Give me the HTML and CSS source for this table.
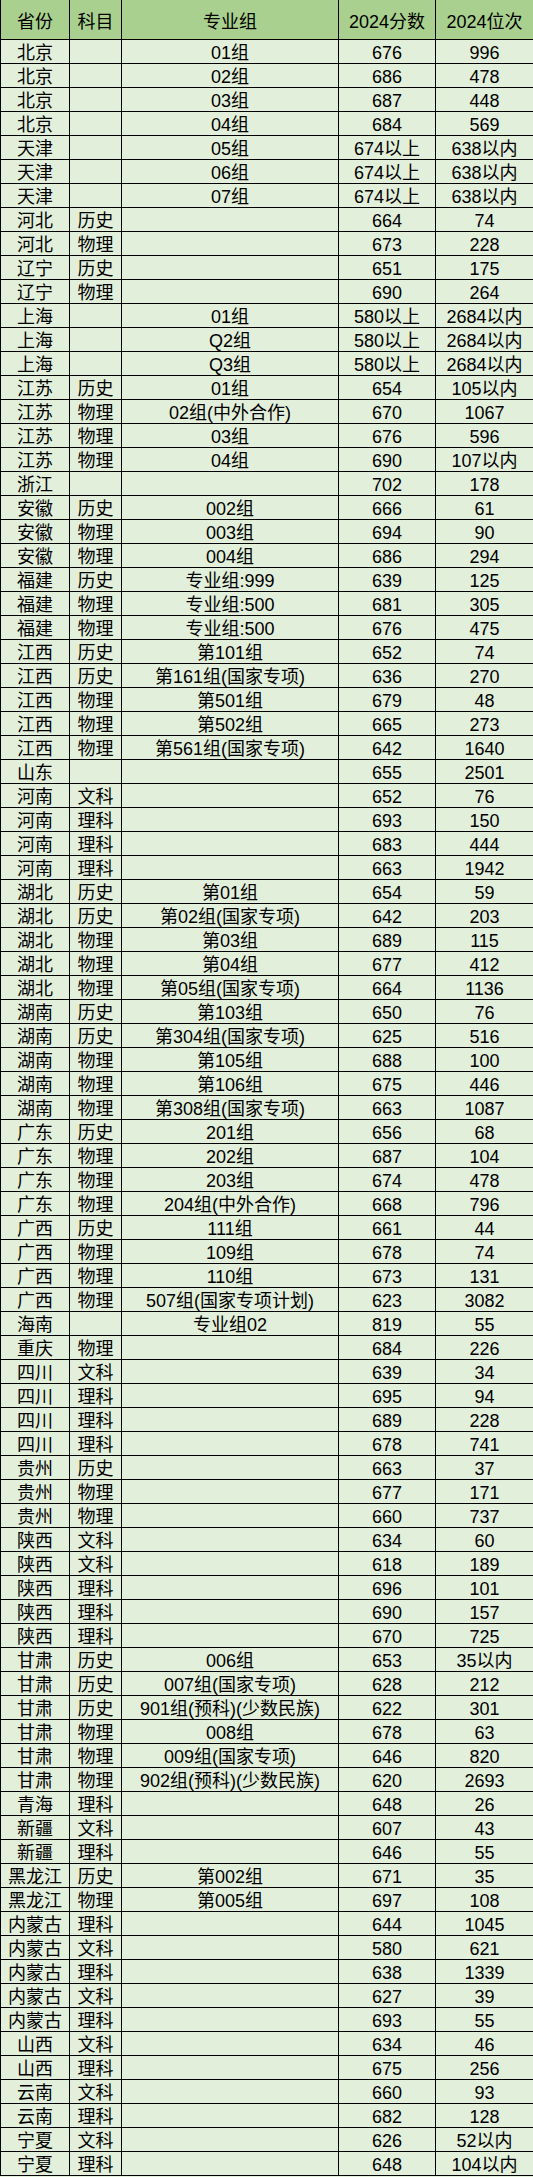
FILE: index.html
```html
<!DOCTYPE html>
<html lang="zh">
<head>
<meta charset="utf-8">
<title>2024分数位次</title>
<link rel="stylesheet" href="styles.css">
</head>
<body>
<table class="score-table">
<colgroup>
<col class="c-prov"><col class="c-subj"><col class="c-group"><col class="c-score"><col class="c-rank">
</colgroup>
<thead>
<tr><th>省份</th><th>科目</th><th>专业组</th><th>2024分数</th><th>2024位次</th></tr>
</thead>
<tbody>
<tr><td>北京</td><td></td><td>01组</td><td>676</td><td>996</td></tr>
<tr><td>北京</td><td></td><td>02组</td><td>686</td><td>478</td></tr>
<tr><td>北京</td><td></td><td>03组</td><td>687</td><td>448</td></tr>
<tr><td>北京</td><td></td><td>04组</td><td>684</td><td>569</td></tr>
<tr><td>天津</td><td></td><td>05组</td><td>674以上</td><td>638以内</td></tr>
<tr><td>天津</td><td></td><td>06组</td><td>674以上</td><td>638以内</td></tr>
<tr><td>天津</td><td></td><td>07组</td><td>674以上</td><td>638以内</td></tr>
<tr><td>河北</td><td>历史</td><td></td><td>664</td><td>74</td></tr>
<tr><td>河北</td><td>物理</td><td></td><td>673</td><td>228</td></tr>
<tr><td>辽宁</td><td>历史</td><td></td><td>651</td><td>175</td></tr>
<tr><td>辽宁</td><td>物理</td><td></td><td>690</td><td>264</td></tr>
<tr><td>上海</td><td></td><td>01组</td><td>580以上</td><td>2684以内</td></tr>
<tr><td>上海</td><td></td><td>Q2组</td><td>580以上</td><td>2684以内</td></tr>
<tr><td>上海</td><td></td><td>Q3组</td><td>580以上</td><td>2684以内</td></tr>
<tr><td>江苏</td><td>历史</td><td>01组</td><td>654</td><td>105以内</td></tr>
<tr><td>江苏</td><td>物理</td><td>02组(中外合作)</td><td>670</td><td>1067</td></tr>
<tr><td>江苏</td><td>物理</td><td>03组</td><td>676</td><td>596</td></tr>
<tr><td>江苏</td><td>物理</td><td>04组</td><td>690</td><td>107以内</td></tr>
<tr><td>浙江</td><td></td><td></td><td>702</td><td>178</td></tr>
<tr><td>安徽</td><td>历史</td><td>002组</td><td>666</td><td>61</td></tr>
<tr><td>安徽</td><td>物理</td><td>003组</td><td>694</td><td>90</td></tr>
<tr><td>安徽</td><td>物理</td><td>004组</td><td>686</td><td>294</td></tr>
<tr><td>福建</td><td>历史</td><td>专业组:999</td><td>639</td><td>125</td></tr>
<tr><td>福建</td><td>物理</td><td>专业组:500</td><td>681</td><td>305</td></tr>
<tr><td>福建</td><td>物理</td><td>专业组:500</td><td>676</td><td>475</td></tr>
<tr><td>江西</td><td>历史</td><td>第101组</td><td>652</td><td>74</td></tr>
<tr><td>江西</td><td>历史</td><td>第161组(国家专项)</td><td>636</td><td>270</td></tr>
<tr><td>江西</td><td>物理</td><td>第501组</td><td>679</td><td>48</td></tr>
<tr><td>江西</td><td>物理</td><td>第502组</td><td>665</td><td>273</td></tr>
<tr><td>江西</td><td>物理</td><td>第561组(国家专项)</td><td>642</td><td>1640</td></tr>
<tr><td>山东</td><td></td><td></td><td>655</td><td>2501</td></tr>
<tr><td>河南</td><td>文科</td><td></td><td>652</td><td>76</td></tr>
<tr><td>河南</td><td>理科</td><td></td><td>693</td><td>150</td></tr>
<tr><td>河南</td><td>理科</td><td></td><td>683</td><td>444</td></tr>
<tr><td>河南</td><td>理科</td><td></td><td>663</td><td>1942</td></tr>
<tr><td>湖北</td><td>历史</td><td>第01组</td><td>654</td><td>59</td></tr>
<tr><td>湖北</td><td>历史</td><td>第02组(国家专项)</td><td>642</td><td>203</td></tr>
<tr><td>湖北</td><td>物理</td><td>第03组</td><td>689</td><td>115</td></tr>
<tr><td>湖北</td><td>物理</td><td>第04组</td><td>677</td><td>412</td></tr>
<tr><td>湖北</td><td>物理</td><td>第05组(国家专项)</td><td>664</td><td>1136</td></tr>
<tr><td>湖南</td><td>历史</td><td>第103组</td><td>650</td><td>76</td></tr>
<tr><td>湖南</td><td>历史</td><td>第304组(国家专项)</td><td>625</td><td>516</td></tr>
<tr><td>湖南</td><td>物理</td><td>第105组</td><td>688</td><td>100</td></tr>
<tr><td>湖南</td><td>物理</td><td>第106组</td><td>675</td><td>446</td></tr>
<tr><td>湖南</td><td>物理</td><td>第308组(国家专项)</td><td>663</td><td>1087</td></tr>
<tr><td>广东</td><td>历史</td><td>201组</td><td>656</td><td>68</td></tr>
<tr><td>广东</td><td>物理</td><td>202组</td><td>687</td><td>104</td></tr>
<tr><td>广东</td><td>物理</td><td>203组</td><td>674</td><td>478</td></tr>
<tr><td>广东</td><td>物理</td><td>204组(中外合作)</td><td>668</td><td>796</td></tr>
<tr><td>广西</td><td>历史</td><td>111组</td><td>661</td><td>44</td></tr>
<tr><td>广西</td><td>物理</td><td>109组</td><td>678</td><td>74</td></tr>
<tr><td>广西</td><td>物理</td><td>110组</td><td>673</td><td>131</td></tr>
<tr><td>广西</td><td>物理</td><td>507组(国家专项计划)</td><td>623</td><td>3082</td></tr>
<tr><td>海南</td><td></td><td>专业组02</td><td>819</td><td>55</td></tr>
<tr><td>重庆</td><td>物理</td><td></td><td>684</td><td>226</td></tr>
<tr><td>四川</td><td>文科</td><td></td><td>639</td><td>34</td></tr>
<tr><td>四川</td><td>理科</td><td></td><td>695</td><td>94</td></tr>
<tr><td>四川</td><td>理科</td><td></td><td>689</td><td>228</td></tr>
<tr><td>四川</td><td>理科</td><td></td><td>678</td><td>741</td></tr>
<tr><td>贵州</td><td>历史</td><td></td><td>663</td><td>37</td></tr>
<tr><td>贵州</td><td>物理</td><td></td><td>677</td><td>171</td></tr>
<tr><td>贵州</td><td>物理</td><td></td><td>660</td><td>737</td></tr>
<tr><td>陕西</td><td>文科</td><td></td><td>634</td><td>60</td></tr>
<tr><td>陕西</td><td>文科</td><td></td><td>618</td><td>189</td></tr>
<tr><td>陕西</td><td>理科</td><td></td><td>696</td><td>101</td></tr>
<tr><td>陕西</td><td>理科</td><td></td><td>690</td><td>157</td></tr>
<tr><td>陕西</td><td>理科</td><td></td><td>670</td><td>725</td></tr>
<tr><td>甘肃</td><td>历史</td><td>006组</td><td>653</td><td>35以内</td></tr>
<tr><td>甘肃</td><td>历史</td><td>007组(国家专项)</td><td>628</td><td>212</td></tr>
<tr><td>甘肃</td><td>历史</td><td>901组(预科)(少数民族)</td><td>622</td><td>301</td></tr>
<tr><td>甘肃</td><td>物理</td><td>008组</td><td>678</td><td>63</td></tr>
<tr><td>甘肃</td><td>物理</td><td>009组(国家专项)</td><td>646</td><td>820</td></tr>
<tr><td>甘肃</td><td>物理</td><td>902组(预科)(少数民族)</td><td>620</td><td>2693</td></tr>
<tr><td>青海</td><td>理科</td><td></td><td>648</td><td>26</td></tr>
<tr><td>新疆</td><td>文科</td><td></td><td>607</td><td>43</td></tr>
<tr><td>新疆</td><td>理科</td><td></td><td>646</td><td>55</td></tr>
<tr><td>黑龙江</td><td>历史</td><td>第002组</td><td>671</td><td>35</td></tr>
<tr><td>黑龙江</td><td>物理</td><td>第005组</td><td>697</td><td>108</td></tr>
<tr><td>内蒙古</td><td>理科</td><td></td><td>644</td><td>1045</td></tr>
<tr><td>内蒙古</td><td>文科</td><td></td><td>580</td><td>621</td></tr>
<tr><td>内蒙古</td><td>理科</td><td></td><td>638</td><td>1339</td></tr>
<tr><td>内蒙古</td><td>文科</td><td></td><td>627</td><td>39</td></tr>
<tr><td>内蒙古</td><td>理科</td><td></td><td>693</td><td>55</td></tr>
<tr><td>山西</td><td>文科</td><td></td><td>634</td><td>46</td></tr>
<tr><td>山西</td><td>理科</td><td></td><td>675</td><td>256</td></tr>
<tr><td>云南</td><td>文科</td><td></td><td>660</td><td>93</td></tr>
<tr><td>云南</td><td>理科</td><td></td><td>682</td><td>128</td></tr>
<tr><td>宁夏</td><td>文科</td><td></td><td>626</td><td>52以内</td></tr>
<tr><td>宁夏</td><td>理科</td><td></td><td>648</td><td>104以内</td></tr>
</tbody>
</table>
</body>
</html>
```

FILE: styles.css
```css
html, body {
  margin: 0;
  padding: 0;
  background: #e2efda;
}

.score-table {
  width: 533px;
  table-layout: fixed;
  border-collapse: separate;
  border-spacing: 0;
  font-family: "Liberation Sans", "Noto Sans CJK SC", sans-serif;
  font-size: 18px;
  color: #000;
}

.c-prov { width: 70px; }
.c-subj { width: 52px; }
.c-group { width: 217px; }
.c-score { width: 97px; }
.c-rank { width: 97px; }

.score-table th,
.score-table td {
  padding: 0;
  text-align: center;
  white-space: nowrap;
  overflow: hidden;
  border-right: 1px solid #000;
  border-bottom: 1px solid #000;
  font-weight: normal;
  box-sizing: border-box;
}

.score-table th:first-child,
.score-table td:first-child {
  border-left: 1px solid #000;
}

.score-table th:last-child,
.score-table td:last-child {
  border-right: none;
}

.score-table th {
  background: #a9d08e;
  height: 40px;
  padding-top: 5px;
  line-height: 34px;
}

.score-table td {
  background: #e2efda;
  height: 24px;
  padding-top: 3px;
  line-height: 20px;
}
```
